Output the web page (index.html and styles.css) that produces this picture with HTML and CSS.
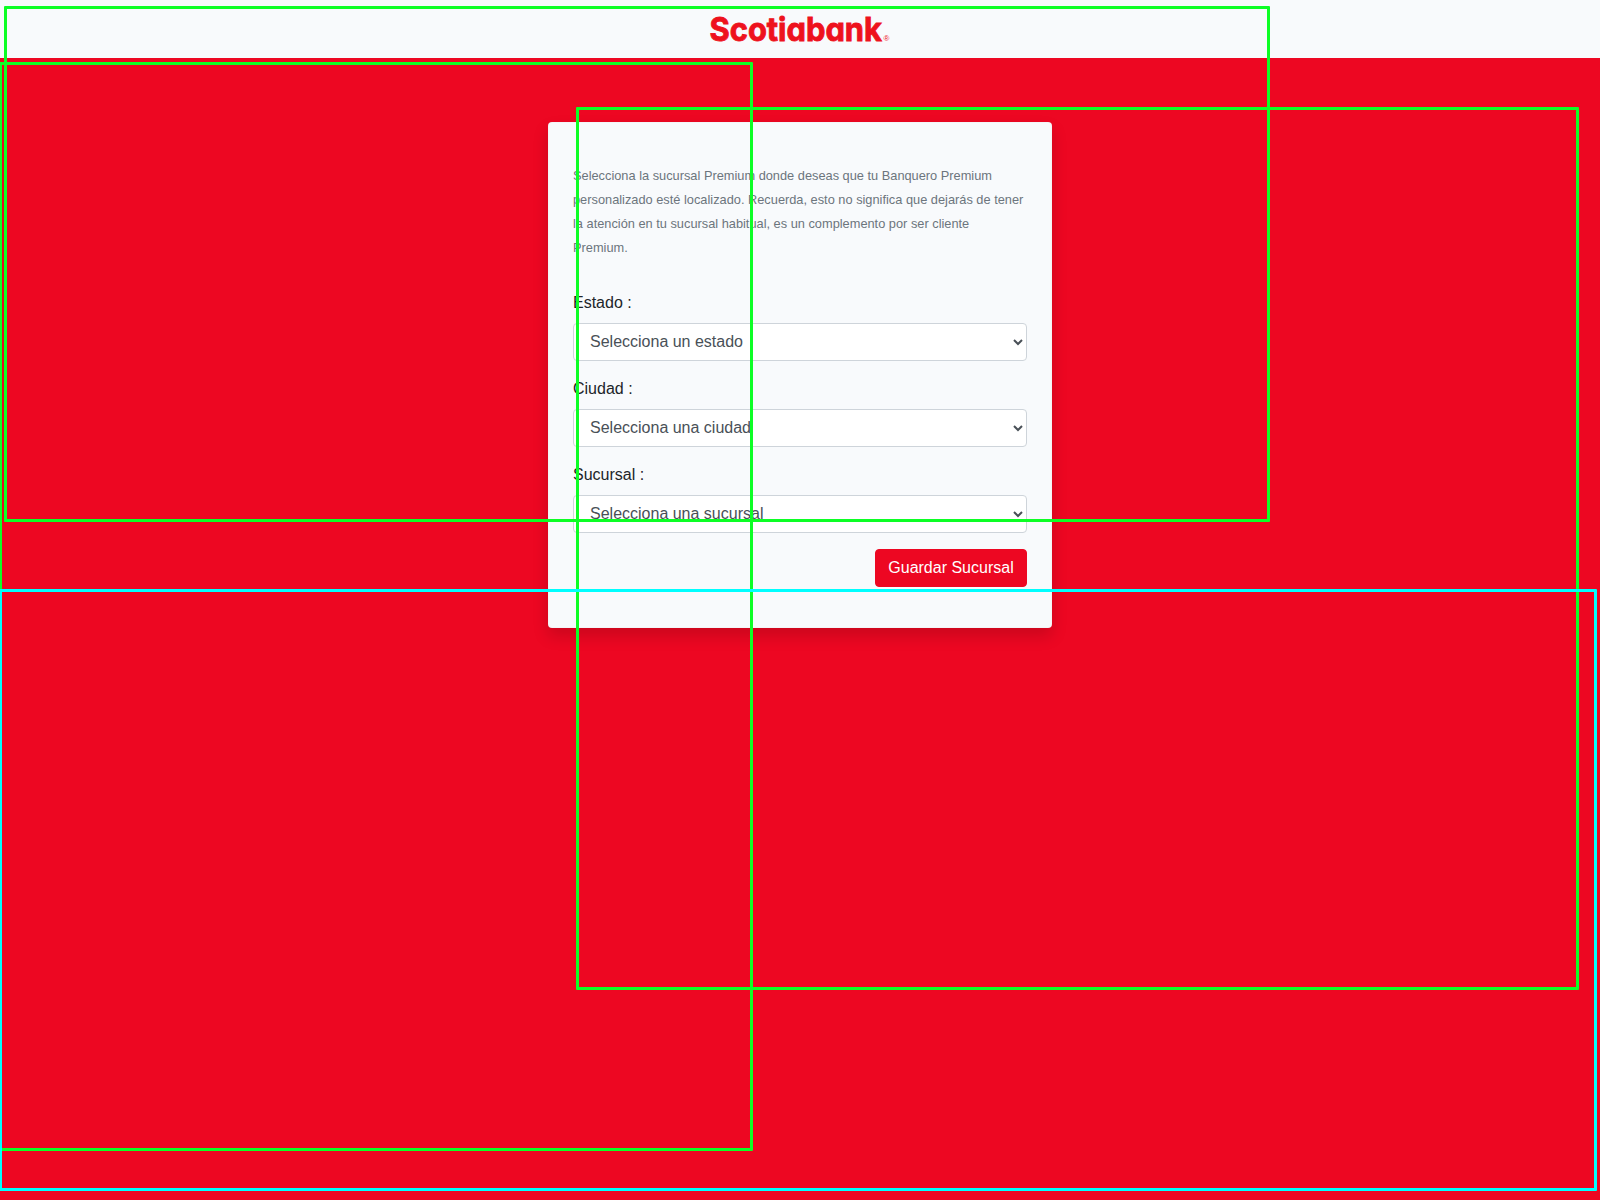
FILE: index.html
```html
<!DOCTYPE html>
<html lang="es">
<head>
<meta charset="utf-8">
<title>Scotiabank</title>
<link rel="stylesheet" href="styles.css">
</head>
<body>
<header class="navbar">
  <svg class="logo" width="182" height="50" viewBox="0 0 182 50" role="img" aria-label="Scotiabank">
    <text class="logo-word" x="0.5" y="41" textLength="172.5" lengthAdjust="spacingAndGlyphs">Scotiabank</text>
    <text class="logo-mark" x="174.5" y="41.2">®</text>
  </svg>
</header>
<main class="content">
  <form class="card">
    <p class="intro"><small>Selecciona la sucursal Premium donde deseas que tu Banquero Premium personalizado esté localizado. Recuerda, esto no significa que dejarás de tener la atención en tu sucursal habitual, es un complemento por ser cliente Premium.</small></p>
    <div class="form-group">
      <label for="estado">Estado :</label>
      <select id="estado" class="form-control"><option>Selecciona un estado</option></select>
    </div>
    <div class="form-group">
      <label for="ciudad">Ciudad :</label>
      <select id="ciudad" class="form-control"><option>Selecciona una ciudad</option></select>
    </div>
    <div class="form-group">
      <label for="sucursal">Sucursal :</label>
      <select id="sucursal" class="form-control"><option>Selecciona una sucursal</option></select>
    </div>
    <div class="actions"><button class="btn" type="button">Guardar Sucursal</button></div>
  </form>
</main>
<div class="region region-top"></div>
<div class="region region-left"></div>
<div class="region region-right"></div>
<div class="region region-bottom"></div>
</body>
</html>
```
FILE: styles.css
```css
*, *::before, *::after { box-sizing: border-box; }

body {
  position: relative;
  margin: 0;
  height: 1200px;
  overflow: hidden;
  background: #ed0722;
  color: #212529;
  font: 16px/1.5 "Liberation Sans", Arial, sans-serif;
}

.navbar {
  display: flex;
  justify-content: center;
  height: 58px;
  background: #f8fafc;
}

.logo { display: block; overflow: visible; }
.logo-word {
  font: 700 33px Inter, sans-serif;
  font-feature-settings: "cv11" 1, "liga" 0;
  fill: #ee121d;
  stroke: #ee121d;
  stroke-width: 0.9px;
}
.logo-mark { font: 8px "Liberation Sans", sans-serif; fill: #ee121d; }

.content {
  display: flex;
  justify-content: center;
  padding-top: 64px;
}

.card {
  width: 504px;
  padding: 40px 24px;
  border: 1px solid rgba(0, 0, 0, 0.02);
  border-radius: 4px;
  background: #f8fafc;
  box-shadow: 0 8px 16px rgba(0, 0, 0, 0.15);
}

.intro {
  margin: 0 0 32px;
  color: #6c757d;
}
.intro small { font-size: 12.8px; }

.form-group { margin-bottom: 16px; }
.form-group label { display: block; margin-bottom: 8px; }

.form-control {
  display: block;
  width: 100%;
  height: 38px;
  padding: 5px 12px 7px;
  border: 1px solid #ced4da;
  border-radius: 4px;
  background: #fff;
  color: #495057;
  font: inherit;
}

.actions { display: flex; justify-content: flex-end; }

.btn {
  width: 152px;
  height: 38px;
  padding: 6px 12px;
  border: 1px solid #ed0722;
  border-radius: 4px;
  background: #ed0722;
  color: #fff;
  font: inherit;
}

/* Outlined areas drawn over the page */
.region {
  position: absolute;
  border: 3px solid #0cff25;
  border-radius: 1px;
  pointer-events: none;
}
.region-top { left: 4px; top: 6px; width: 1266px; height: 516px; }
.region-left { left: -1px; top: 62px; width: 754px; height: 1089px; }
.region-right { left: 576px; top: 107px; width: 1003px; height: 883px; }
.region-bottom { left: -1px; top: 589px; width: 1598px; height: 602px; border-color: #00ffff; }
```
